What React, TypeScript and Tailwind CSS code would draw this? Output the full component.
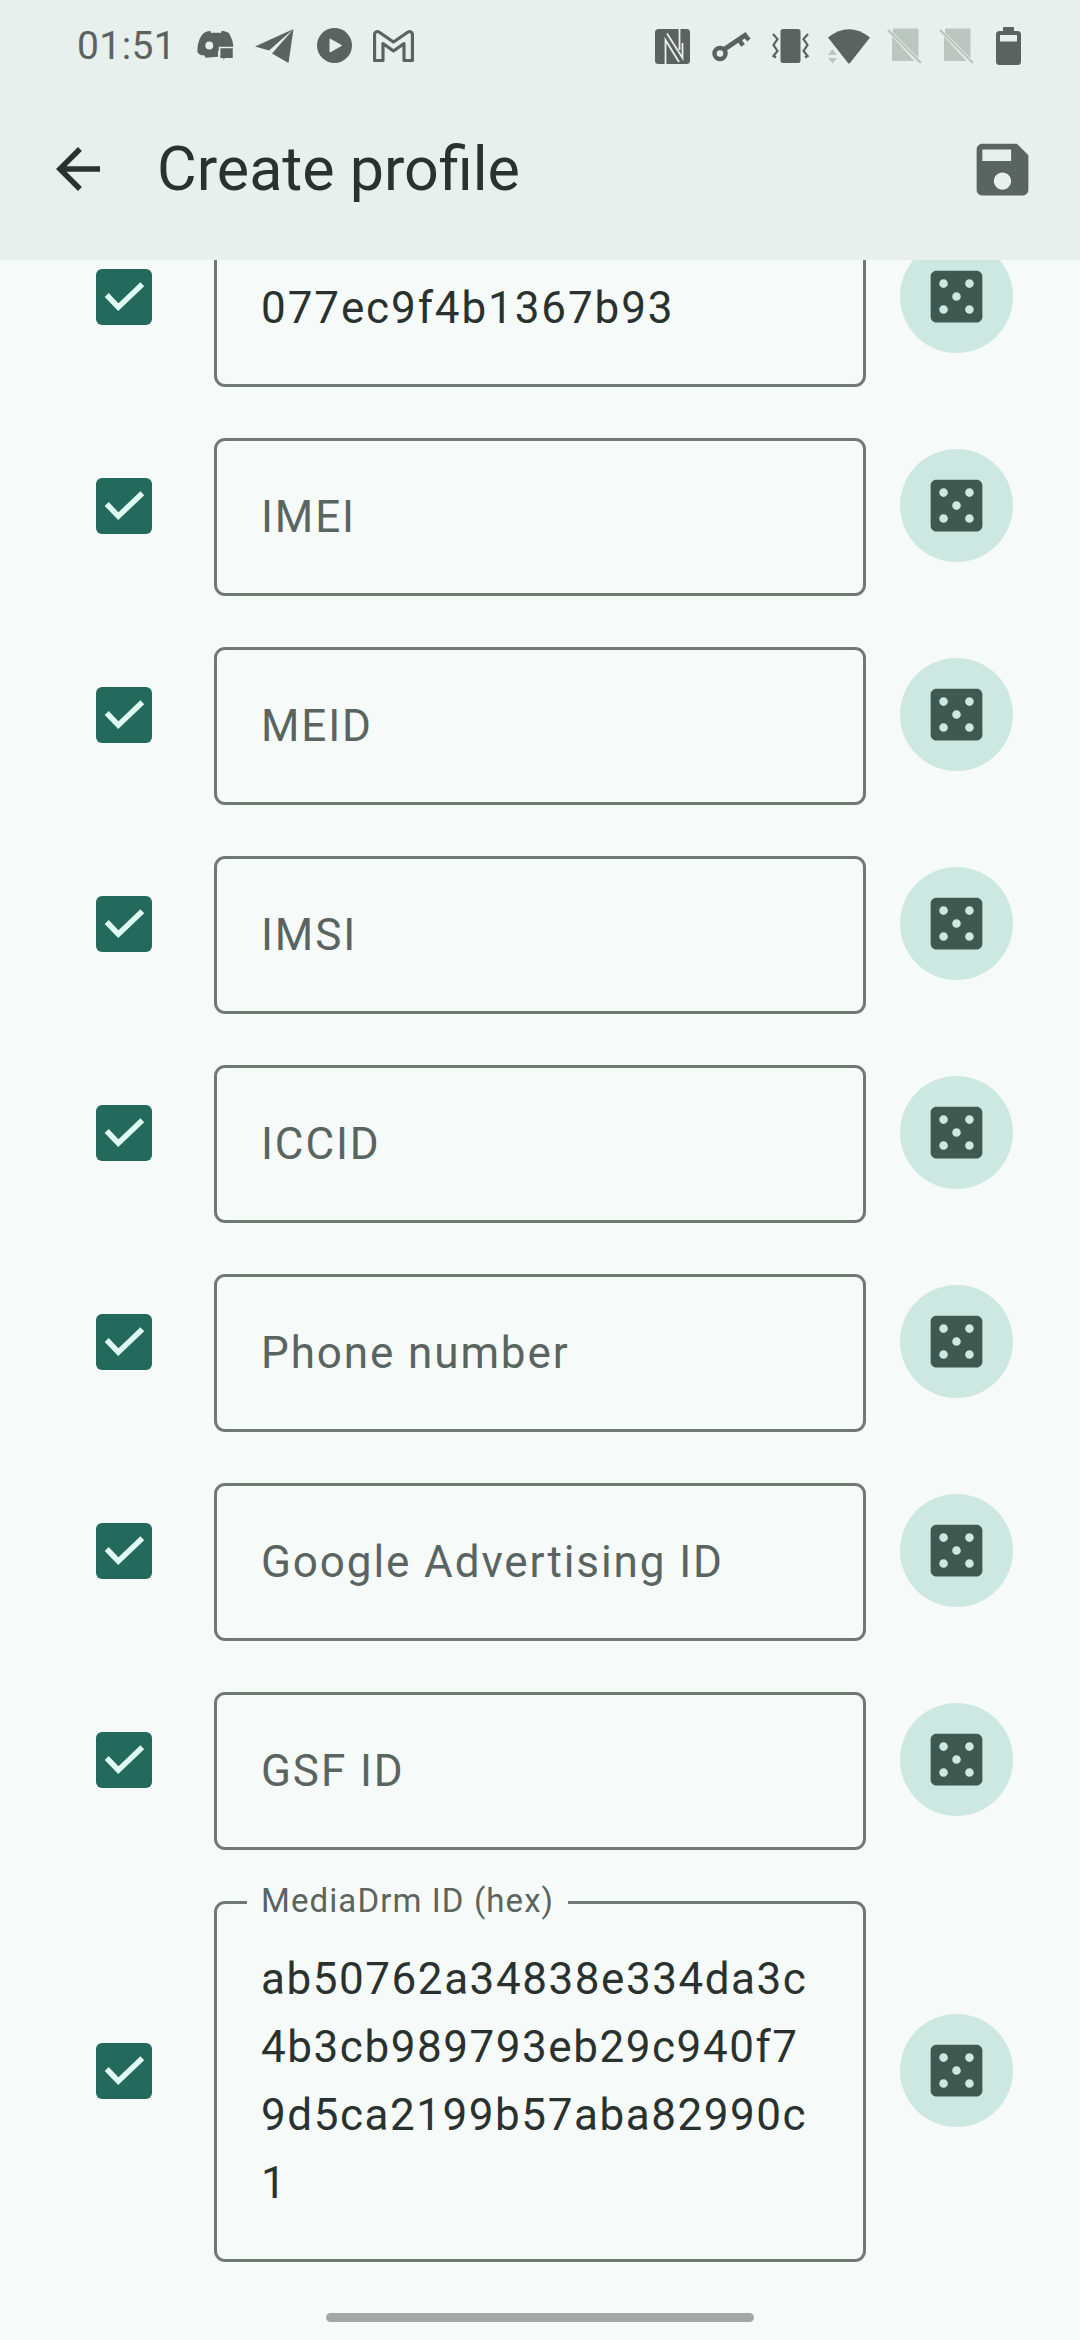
const dark = '#5c6260';
const faint = '#bcc6c1';
const headerBg = '#e7f0ed';

const fields = [
  { label: 'IMEI' },
  { label: 'MEID' },
  { label: 'IMSI' },
  { label: 'ICCID' },
  { label: 'Phone number' },
  { label: 'Google Advertising ID' },
  { label: 'GSF ID' },
];

const StatusIconsLeft = () => (
  <div className="flex items-center">
    {/* discord + bubble */}
    <svg width="38" height="33" viewBox="0 0 36 32" className="ml-[21px]">
      <path d="M6 3C9 1.200 11.500 .6 12.500 1L13.500 3C16 2.600 20 2.600 22.500 3L23.500 1C25.500 1 28 1.500 30.500 3C33.500 8 35 13 35 19L20 20V26L8 27L6.500 24.500C4 25 1.500 23.500 0 21.500C-.3 14 2 7 6 3Z" fill={dark} />
      <circle cx="11.500" cy="15" r="3.800" fill={headerBg} />
      <path d="M21.500 17H35V28H27L24.500 31.500V28H21.500Z" fill={dark} stroke={headerBg} strokeWidth="1.500" />
    </svg>
    {/* telegram */}
    <svg width="39" height="34" viewBox="0 0 39 34" className="ml-[20px]">
      <path d="M38.500 0L0 17.500L14 21.500Z" fill={dark} />
      <path d="M38.500 0L17 24.500L33.500 34Z" fill={dark} />
    </svg>
    {/* play */}
    <svg width="36" height="36" viewBox="0 0 36 36" className="ml-[23px]">
      <circle cx="17.500" cy="17.500" r="17.500" fill={dark} />
      <path d="M13 11L24.500 17.500L13 24Z" fill={headerBg} stroke={headerBg} strokeLinejoin="round" />
    </svg>
    {/* gmail */}
    <svg width="41" height="32" viewBox="0 0 39 32" className="ml-[20px]" preserveAspectRatio="none">
      <path d="M1.500 4.500C1.500 2 3.800 .8 6 2.200L19.500 12L33 2.200C35.200 .8 37.500 2 37.500 4.500V30.500H29.500V13.500L19.500 21L9.500 13.500V30.500H1.500Z" fill="none" stroke={dark} strokeWidth="3" strokeLinejoin="round" />
    </svg>
  </div>
);

const StatusIconsRight = () => (
  <div className="flex items-center">
    {/* nfc */}
    <svg width="35" height="35" viewBox="0 0 35 35">
      <rect width="35" height="35" rx="3.500" fill={dark} />
      <path d="M10.500 35V11L24 33" fill="none" stroke={headerBg} strokeWidth="1.800" />
      <path d="M12 4.500L27.500 29V14" fill="none" stroke={headerBg} strokeWidth="1.800" />
      <path d="M24.500 0V21" stroke={headerBg} strokeWidth="1.800" />
    </svg>
    {/* vpn key */}
    <svg width="39" height="33" viewBox="0 0 39 33" className="ml-[22px]">
      <circle cx="8" cy="23.500" r="5.500" fill="none" stroke={dark} strokeWidth="4.500" />
      <path d="M12 19.500L35 4" stroke={dark} strokeWidth="5" />
      <path d="M26.500 9L31 15.500M32.500 5L37 10" stroke={dark} strokeWidth="4.500" />
    </svg>
    {/* vibrate */}
    <svg width="37" height="34" viewBox="0 0 37 34" className="ml-[21px]">
      <rect x="8.500" y="0" width="20" height="34" rx="2.500" fill={dark} />
      <path d="M1 5L5.500 10L1.500 16L5.500 22L1.500 27L4 28.500" fill="none" stroke={dark} strokeWidth="2.200" />
      <path d="M36 5L31.500 10L35.500 16L31.500 22L35.500 27L33 28.500" fill="none" stroke={dark} strokeWidth="2.200" />
    </svg>
    {/* wifi */}
    <svg width="42" height="35" viewBox="0 0 42 35" className="ml-[19px]">
      <path d="M0 8.500Q21 -8 42 8.500L22 34Q21 35 20 34Z" fill={dark} />
      <path d="M4.500 20L9 26H0Z M0 29H9L4.500 34.500Z" fill={faint} />
    </svg>
    {/* no sim x2 */}
    {[0, 1].map((i) => (
      <svg key={i} width="35" height="36" viewBox="0 0 35 36" className="ml-[17px]">
        <path d="M6 .5H30.500Q31.500 .5 31.500 1.500V30L6 4.500Z M5 8.500L27.500 33H5Z" fill={faint} />
        <path d="M1 2L34 35" stroke={faint} strokeWidth="2.400" />
      </svg>
    ))}
    {/* battery */}
    <svg width="25" height="38" viewBox="0 0 25 38" className="ml-[22px]">
      <rect x="7" y="0" width="11" height="6" rx="1" fill={dark} />
      <rect x="0" y="4" width="25" height="34" rx="3.500" fill={dark} />
      <rect x="4" y="8" width="17" height="6.500" fill={headerBg} />
    </svg>
  </div>
);

const Header = () => (
  <header className="z-10 h-[260px] shrink-0 bg-[#e7f0ed]">
    <div className="flex h-[92px] items-center justify-between pl-[77px] pr-[59px]">
      <div className="flex items-center">
        <span className="text-[39px] leading-none tracking-[0.4px] text-[#5c6260]">01:51</span>
        <StatusIconsLeft />
      </div>
      <StatusIconsRight />
    </div>
    <div className="flex h-[154px] items-center pl-[45px] pr-[43px]">
      <svg width="66" height="66" viewBox="0 0 24 24" fill="#2a3230">
        <path d="M20 11H7.830l5.590-5.590L12 4l-8 8 8 8 1.410-1.410L7.830 13H20v-2z" />
      </svg>
      <h1 className="ml-[46px] flex-1 text-[61px] font-normal leading-none text-[#2a3230]">Create profile</h1>
      <svg width="69" height="69" viewBox="0 0 24 24" fill="#5a6561">
        <path d="M17 3H5c-1.110 0-2 .9-2 2v14c0 1.100.89 2 2 2h14c1.100 0 2-.9 2-2V7l-4-4zm-5 16c-1.660 0-3-1.340-3-3s1.340-3 3-3 3 1.340 3 3-1.340 3-3 3zm3-10H5V5h10v4z" />
      </svg>
    </div>
  </header>
);

const CheckBox = () => (
  <div className="h-[56px] w-[56px] shrink-0 rounded-[6px] bg-[#236a5d]">
    <svg width="56" height="56" viewBox="0 0 56 56">
      <path d="M10.700 26L22.300 38.200L46.300 15.300" fill="none" stroke="#dffbf2" strokeWidth="5.500" />
    </svg>
  </div>
);

const DiceButton = () => (
  <button className="flex h-[113px] w-[113px] shrink-0 items-center justify-center rounded-full bg-[#cde8e0]">
    <svg width="69" height="69" viewBox="0 0 24 24" fill="#3f5850">
      <path d="M19 3H5c-1.100 0-2 .9-2 2v14c0 1.100.9 2 2 2h14c1.100 0 2-.9 2-2V5c0-1.100-.9-2-2-2zM7.500 18c-.83 0-1.500-.67-1.500-1.500S6.670 15 7.500 15s1.500.67 1.500 1.500S8.330 18 7.500 18zm0-9C6.670 9 6 8.330 6 7.500S6.670 6 7.500 6 9 6.670 9 7.500 8.330 9 7.500 9zm4.500 4.500c-.83 0-1.500-.67-1.500-1.500s.67-1.500 1.500-1.500 1.500.67 1.500 1.500-.67 1.500-1.500 1.500zm4.500 4.500c-.83 0-1.500-.67-1.500-1.500s.67-1.500 1.500-1.500 1.500.67 1.500 1.500-.67 1.500-1.500 1.500zm0-9c-.83 0-1.500-.67-1.500-1.500S15.670 6 16.500 6s1.500.67 1.500 1.500S17.330 9 16.500 9z" />
    </svg>
  </button>
);

const Row = ({ children }: { children: React.ReactNode }) => (
  <div className="flex items-center pl-[96px]">
    <CheckBox />
    <div className="ml-[62px] w-[652px] shrink-0 pt-[22px]">{children}</div>
    <div className="ml-[34px] -mt-[1px]">
      <DiceButton />
    </div>
  </div>
);

const Box = ({ text, filled }: { text: string; filled?: boolean }) => (
  <div
    className={`flex h-[158px] items-center rounded-[11px] border-[3px] border-[#717975] pl-[44px] text-[44px] leading-none tracking-[1.9px] ${
      filled ? 'text-[#2a3230]' : 'text-[#5a6461]'
    }`}
  >
    {text}
  </div>
);

export default function App() {
  return (
    <div className="relative flex h-[2340px] w-[1080px] flex-col overflow-hidden bg-[#f6fbf9] font-['Roboto',sans-serif]">
      <Header />
      <main className="-mt-[53px] flex flex-col gap-[29px]">
        <Row>
          <Box text="077ec9f4b1367b93" filled />
        </Row>
        {fields.map((f) => (
          <Row key={f.label}>
            <Box text={f.label} />
          </Row>
        ))}
        <Row>
          <div className="relative h-[361px] rounded-[11px] border-[3px] border-[#717975] pl-[44px] pr-[40px] pt-[41px] text-[44px] leading-[68px] tracking-[1.55px] text-[#2a3230] break-all">
            <span className="absolute -top-[22px] left-[30px] bg-[#f6fbf9] px-[14px] text-[33px] leading-[38px] tracking-[1.1px] text-[#5a6461]">
              MediaDrm ID (hex)
            </span>
            ab50762a34838e334da3c4b3cb989793eb29c940f79d5ca2199b57aba82990c1
          </div>
        </Row>
      </main>
      {/* gesture pill */}
      <div className="absolute bottom-[18px] left-[326px] h-[9px] w-[428px] rounded-full bg-[#a5a7a6]" />
    </div>
  );
}
